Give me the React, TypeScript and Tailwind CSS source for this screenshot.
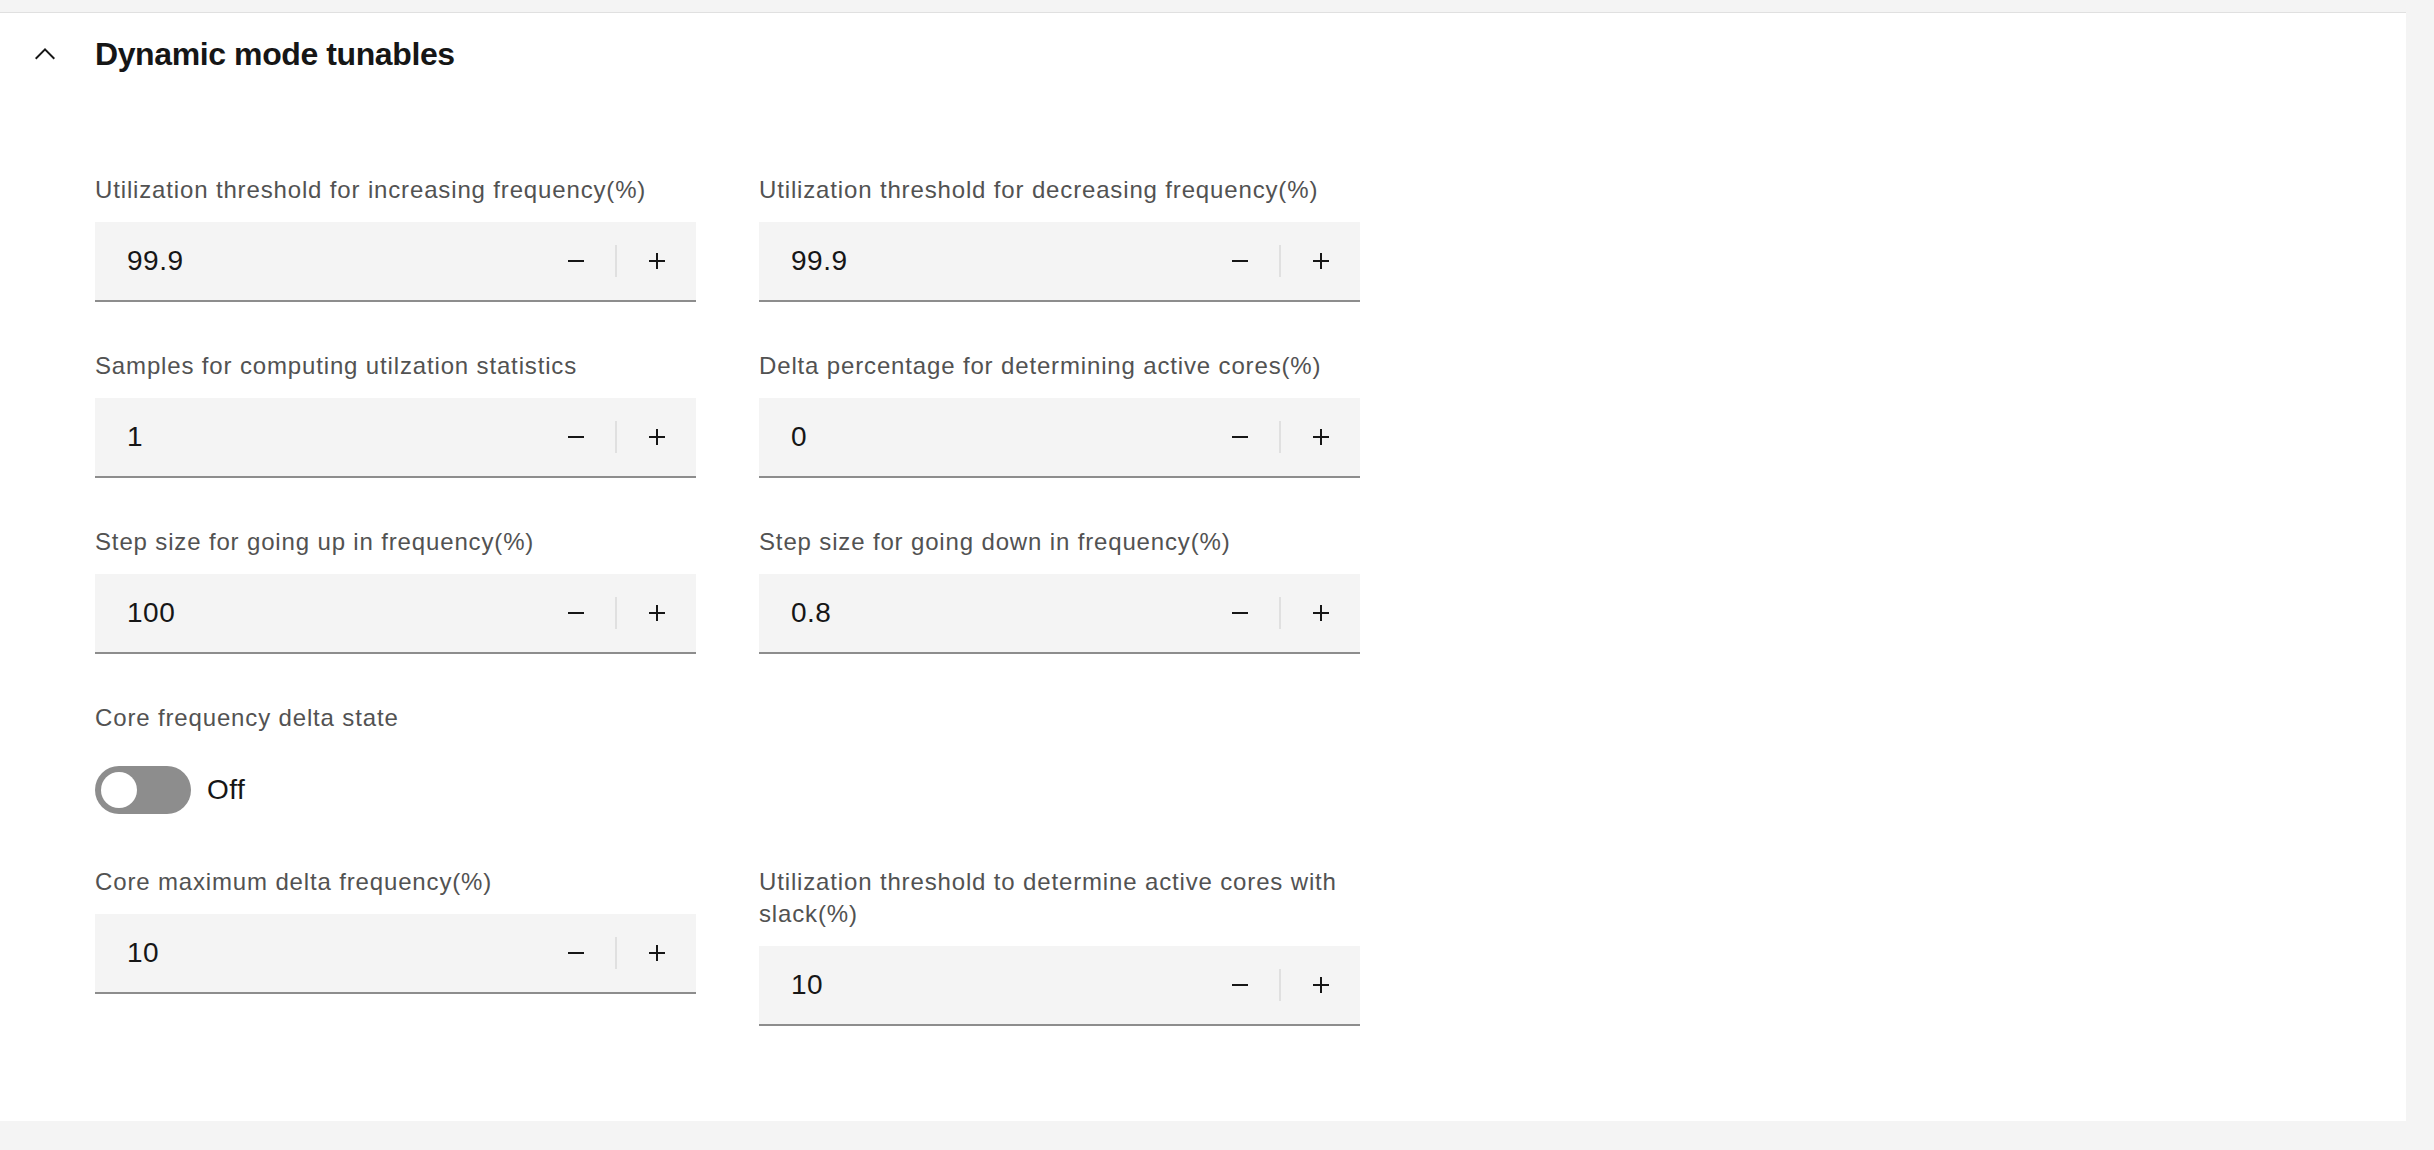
import * as React from 'react';

interface Field {
  label: string;
  value: string;
}

const SubtractIcon: React.FC = () => (
  <svg width="32" height="32" viewBox="0 0 32 32" fill="#161616" aria-hidden="true">
    <path d="M8 15H24V17H8z" />
  </svg>
);

const AddIcon: React.FC = () => (
  <svg width="32" height="32" viewBox="0 0 32 32" fill="#161616" aria-hidden="true">
    <path d="M17 15L17 8 15 8 15 15 8 15 8 17 15 17 15 24 17 24 17 17 24 17 24 15z" />
  </svg>
);

const ChevronUp: React.FC = () => (
  <svg width="32" height="32" viewBox="0 0 32 32" fill="#161616" aria-hidden="true">
    <path d="M16 10L26 20 24.6 21.4 16 12.8 7.4 21.4 6 20 16 10z" />
  </svg>
);

const NumberInput: React.FC<Field> = ({ label, value }) => (
  <div className="flex flex-col">
    <label className="text-[24px] leading-[32px] tracking-[0.85px] text-[#525252] mb-[16px]">{label}</label>
    <div className="flex items-center h-[80px] bg-[#f4f4f4] border-b-2 border-[#8d8d8d]">
      <span className="flex-1 pl-[32px] text-[28px] leading-[36px] text-[#161616] tracking-[0.5px]">{value}</span>
      <button className="w-[79px] h-full flex items-center justify-center">
        <SubtractIcon />
      </button>
      <span className="w-[2px] h-[32px] bg-[#e0e0e0]" />
      <button className="w-[79px] h-full flex items-center justify-center">
        <AddIcon />
      </button>
    </div>
  </div>
);

const fields: Field[] = [
  { label: 'Utilization threshold for increasing frequency(%)', value: '99.9' },
  { label: 'Utilization threshold for decreasing frequency(%)', value: '99.9' },
  { label: 'Samples for computing utilzation statistics', value: '1' },
  { label: 'Delta percentage for determining active cores(%)', value: '0' },
  { label: 'Step size for going up in frequency(%)', value: '100' },
  { label: 'Step size for going down in frequency(%)', value: '0.8' },
];

const App: React.FC = () => {
  return (
    <div
      className="min-h-screen bg-[#f4f4f4] pt-[12px] pb-[29px] pr-[28px]"
      style={{ fontFamily: '"Liberation Sans", Arial, sans-serif' }}
    >
      <div className="bg-white border-t border-[#e0e0e0]">
        <div className="flex items-center h-[80px] pl-[29px] gap-[34px] pt-[2px]">
          <ChevronUp />
          <h2 className="text-[32px] font-semibold text-[#161616] leading-[40px] tracking-[-0.4px]">
            Dynamic mode tunables
          </h2>
        </div>

        <div className="pl-[95px] pt-[81px] pb-[95px]">
          <div className="grid grid-cols-[601px_601px] gap-x-[63px] gap-y-[48px]">
            {fields.map(f => (
              <NumberInput key={f.label} label={f.label} value={f.value} />
            ))}

            <div className="flex flex-col mb-[4px]">
              <label className="text-[24px] leading-[32px] tracking-[0.85px] text-[#525252] mb-[32px]">
                Core frequency delta state
              </label>
              <div className="flex items-center gap-[16px]">
                <div className="flex items-center w-[96px] h-[48px] rounded-full bg-[#8d8d8d] pl-[6px]">
                  <span className="w-[36px] h-[36px] rounded-full bg-white" />
                </div>
                <span className="text-[28px] text-[#161616] tracking-[0.5px]">Off</span>
              </div>
            </div>
            <div />

            <NumberInput label="Core maximum delta frequency(%)" value="10" />
            <NumberInput label="Utilization threshold to determine active cores with slack(%)" value="10" />
          </div>
        </div>
      </div>
    </div>
  );
};

export default App;
